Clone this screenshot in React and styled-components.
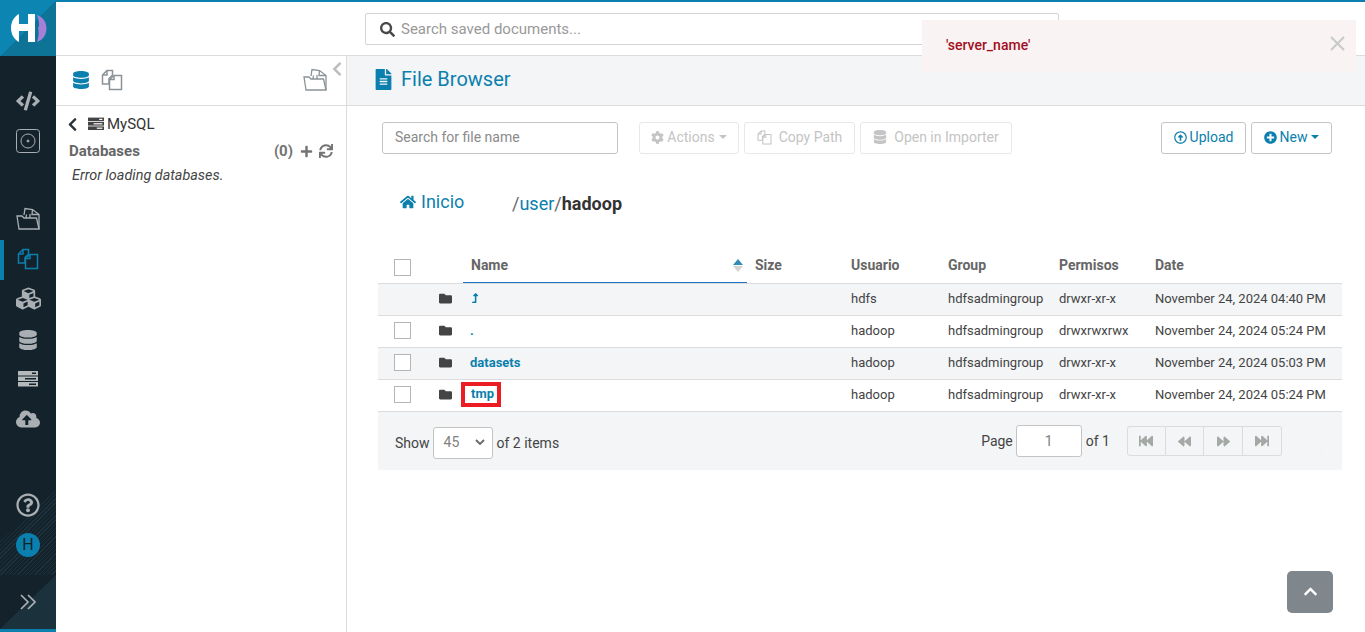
import React from "react";
import styled, { createGlobalStyle } from "styled-components";
import {
  FaChevronLeft,
  FaChevronUp,
  FaCloudUploadAlt,
  FaCode,
  FaCog,
  FaCubes,
  FaDatabase,
  FaFastBackward,
  FaFastForward,
  FaBackward,
  FaForward,
  FaFileAlt,
  FaFolder,
  FaHome,
  FaLevelUpAlt,
  FaPlus,
  FaPlusCircle,
  FaRegArrowAltCircleUp,
  FaRegQuestionCircle,
  FaSearch,
  FaSync,
} from "react-icons/fa";

const BLUE = "#0b7fad";

const GlobalStyle = createGlobalStyle`
  html, body { margin: 0; padding: 0; height: 100%; }
  body {
    font-family: Roboto, "Liberation Sans", sans-serif;
    font-size: 13px;
    color: #333;
    background: #fff;
    overflow: hidden;
  }
`;

const Page = styled.div`
  position: relative;
  display: flex;
  width: 1365px;
  height: 632px;
  overflow: hidden;
`;

/* left icon rail */
const Rail = styled.nav`
  position: relative;
  flex: 0 0 56px;
  display: flex;
  flex-direction: column;
  background: #14232b;
  border-bottom: 3px solid ${BLUE};
  box-sizing: border-box;

  &::before {
    content: "";
    position: absolute;
    left: 0;
    right: 0;
    top: 490px;
    height: 86px;
    background: repeating-linear-gradient(135deg, #1d323d 0 1px, #14232b 1px 3px);
    clip-path: polygon(100% 0, 100% 100%, 0 100%, 0 60%);
  }
`;

const Logo = styled.div`
  flex: 0 0 56px;
  display: flex;
  align-items: center;
  justify-content: center;
  background: linear-gradient(135deg, #0c85b3 50%, #0d7397 50%);
`;

const RailGroup = styled.div`
  position: relative;
  display: flex;
  flex-direction: column;
  margin-top: ${(p) => p.$top}px;
`;

const RailItem = styled.div`
  position: relative;
  height: 40px;
  box-sizing: border-box;
  display: flex;
  align-items: center;
  justify-content: center;
  padding-bottom: ${(p) => p.$lift || 0}px;
  color: ${(p) => (p.$active ? BLUE : "#a9afb3")};
  box-shadow: ${(p) => (p.$active ? `inset 4px 0 0 ${BLUE}` : "none")};
`;

const Avatar = styled.div`
  width: 24px;
  height: 24px;
  border-radius: 50%;
  background: ${BLUE};
  color: #14232b;
  font-size: 16px;
  line-height: 24px;
  text-align: center;
`;

const RailFooter = styled.div`
  position: relative;
  margin-top: 10px;
  height: 54px;
  display: flex;
  align-items: center;
  justify-content: center;
  color: #a9afb3;
  background: #14232b;

  &::before {
    content: "";
    position: absolute;
    inset: 0;
    background: #1b323d;
    clip-path: polygon(100% 0, 100% 100%, 0 100%);
  }

  svg {
    position: relative;
  }
`;

/* right of the rail */
const Shell = styled.div`
  flex: 1;
  display: flex;
  flex-direction: column;
  min-width: 0;
`;

const TopBar = styled.header`
  flex: 0 0 56px;
  box-sizing: border-box;
  display: flex;
  align-items: flex-start;
  padding: 11px 0 0 309px;
  border-top: 2px solid ${BLUE};
  border-bottom: 1px solid #dcdcdc;
`;

const GlobalSearch = styled.div`
  width: 694px;
  height: 32px;
  box-sizing: border-box;
  display: flex;
  align-items: center;
  gap: 6px;
  padding-left: 14px;
  border: 1px solid #d5d5d5;
  border-radius: 2px;
  font-size: 15px;
  color: #999;

  svg {
    color: #4a4a4a;
  }
`;

const Columns = styled.div`
  flex: 1;
  display: flex;
  min-height: 0;
`;

/* assist panel */
const Assist = styled.aside`
  position: relative;
  flex: 0 0 291px;
  box-sizing: border-box;
  border-right: 1px solid #dcdcdc;
`;

const AssistTabs = styled.div`
  height: 50px;
  box-sizing: border-box;
  display: flex;
  align-items: center;
  padding: 0 19px 2px 16px;
  gap: 11px;
  border-bottom: 1px solid #dcdcdc;
`;

const Spacer = styled.div`
  flex: 1;
`;

const Collapse = styled.div`
  position: absolute;
  top: 5px;
  right: 1px;
  color: #bdbdbd;
  line-height: 0;
`;

const AssistBody = styled.div`
  padding: 9px 13px 0 11px;
`;

const Crumb = styled.div`
  display: flex;
  align-items: center;
  height: 18px;
  font-size: 15px;
  color: #333;

  svg:first-child {
    color: #28333b;
    margin: 0 8px 0 -2px;
  }

  svg + svg {
    margin-right: 3px;
  }
`;

const DbHeader = styled.div`
  display: flex;
  align-items: center;
  margin: 9px 0 0 2px;
  height: 18px;
  font-size: 15px;
  font-weight: 700;
  color: #666;
`;

const DbTools = styled.div`
  display: flex;
  align-items: center;
  gap: 6px;
  color: #737373;

  svg:first-of-type {
    margin-left: 1px;
  }
`;

const DbError = styled.div`
  margin: 7px 0 0 5px;
  font-size: 14.4px;
  font-style: italic;
  color: #444;
`;

/* file browser */
const Main = styled.main`
  flex: 1;
  min-width: 0;
  display: flex;
  flex-direction: column;
`;

const TitleBar = styled.div`
  flex: 0 0 50px;
  box-sizing: border-box;
  display: flex;
  align-items: center;
  gap: 7px;
  padding: 0 0 3px 26px;
  background: #f3f5f7;
  border-bottom: 1px solid #dcdcdc;
  color: ${BLUE};
  font-size: 20px;
`;

const Toolbar = styled.div`
  display: flex;
  align-items: center;
  padding: 16px 33px 0 35px;
`;

const FileSearch = styled.div`
  width: 236px;
  height: 32px;
  box-sizing: border-box;
  display: flex;
  align-items: center;
  padding: 0 0 2px 12px;
  margin-right: 21px;
  border: 1px solid #c4c4c4;
  border-radius: 3px;
  font-size: 14px;
  color: #8a8a8a;
`;

const ButtonRow = styled.div`
  display: flex;
  gap: 5px;
`;

const Button = styled.div`
  width: ${(p) => p.$w}px;
  height: 32px;
  box-sizing: border-box;
  display: flex;
  align-items: center;
  justify-content: center;
  gap: ${(p) => p.$gap}px;
  padding-bottom: 2px;
  border-radius: 3px;
  font-size: 14px;
  border: 1px solid ${(p) => (p.$live ? "#c4c4c4" : "#e8e8e8")};
  color: ${(p) => (p.$live ? BLUE : "#c4c4c4")};
`;

const Caret = styled.span`
  width: 0;
  height: 0;
  margin-left: 1px;
  border-left: 4px solid transparent;
  border-right: 4px solid transparent;
  border-top: 4px solid currentColor;
`;

const Breadcrumbs = styled.div`
  display: flex;
  align-items: center;
  height: 30px;
  margin-top: 34px;
  padding-left: 53px;
  font-size: 18px;
  color: ${BLUE};
`;

const HomeLink = styled.div`
  display: flex;
  align-items: center;
  gap: 5px;
  width: 112px;
  margin-top: -3px;
`;

const Path = styled.div`
  color: ${BLUE};

  span {
    color: #666;
  }

  b {
    color: #333;
    font-weight: 700;
  }
`;

const Listing = styled.div`
  margin: 31px 23px 0 31px;
`;

const Row = styled.div`
  display: grid;
  grid-template-columns: 61px 24px 284px 96px 97px 111px 96px 1fr;
  align-items: center;
  height: ${(p) => (p.$head ? 35 : 32)}px;
  box-sizing: border-box;
  padding-bottom: ${(p) => (p.$head ? 3 : 2)}px;
  border-bottom: 1px solid #dcdcdc;
  background: ${(p) => (p.$shade ? "#f3f5f7" : "#fff")};
  font-size: 13px;
  color: #444;
`;

const Cell = styled.div`
  padding-left: 8px;
  white-space: nowrap;
`;

const HeadCell = styled(Cell)`
  font-size: 14px;
  font-weight: 700;
  color: #666;
`;

const NameHead = styled(HeadCell)`
  align-self: start;
  display: flex;
  align-items: center;
  justify-content: space-between;
  height: 34px;
  box-sizing: border-box;
  margin-bottom: -3px;
  padding: 0 4px 1px 8px;
  border-bottom: 1px solid #1e73c8;
`;

const SortArrows = styled.span`
  display: flex;
  flex-direction: column;
  gap: 1px;

  &::before,
  &::after {
    content: "";
    border-left: 5px solid transparent;
    border-right: 5px solid transparent;
  }

  &::before {
    border-bottom: 6px solid #338bb8;
  }

  &::after {
    border-top: 6px solid #d4d4d4;
  }
`;

const CheckCell = styled.div`
  padding-left: 16px;
  line-height: 0;
`;

const Check = styled.span`
  display: inline-block;
  width: 17px;
  height: 17px;
  box-sizing: border-box;
  margin-top: ${(p) => p.$low || 0}px;
  margin-bottom: ${(p) => (p.$low ? 0 : 1)}px;
  border: 1px solid #b5b5b5;
  background: #fff;
`;

const FolderCell = styled.div`
  color: #444;
  line-height: 0;
`;

const FileName = styled(Cell)`
  padding-left: 7px;
  color: ${BLUE};
  font-weight: 700;
`;

const Marked = styled.span`
  display: inline-block;
  width: 40px;
  height: 25px;
  box-sizing: border-box;
  margin-left: -9px;
  padding-left: 6px;
  border: 4px solid #ec1c24;
  line-height: 15px;
  vertical-align: middle;
`;

const Footer = styled.div`
  display: flex;
  align-items: center;
  height: 58px;
  box-sizing: border-box;
  padding: 4px 20px 0 17px;
  background: #f3f5f7;
  font-size: 14px;
  color: #444;
`;

const SizeSelect = styled.div`
  width: 60px;
  height: 32px;
  box-sizing: border-box;
  display: flex;
  align-items: center;
  justify-content: space-between;
  margin: 0 4px 0 3px;
  padding: 0 7px 2px 10px;
  background: #fff;
  border: 1px solid #c4c4c4;
  border-radius: 3px;
  color: #808080;
`;

const PageGroup = styled.div`
  display: flex;
  align-items: center;
  margin-bottom: 4px;
`;

const PageInput = styled.div`
  width: 66px;
  height: 32px;
  box-sizing: border-box;
  display: flex;
  align-items: center;
  justify-content: center;
  margin: 0 4px 0 3px;
  background: #fff;
  border: 1px solid #c4c4c4;
  border-radius: 3px;
  color: #808080;
`;

const Pager = styled.div`
  display: flex;
  width: 195px;
  height: 30px;
  margin-left: 17px;
  border-radius: 3px;
  background: #f4f5f7;
  box-shadow: 0 0 1px rgba(0, 0, 0, 0.06);
`;

const PagerButton = styled.div`
  width: 38.7px;
  box-sizing: border-box;
  display: flex;
  align-items: center;
  justify-content: center;
  color: #a5a9a5;
  border: 1px solid #dcdcdc;
  border-left-width: ${(p) => (p.$first ? 1 : 0)}px;
  border-radius: ${(p) => (p.$first ? "3px 0 0 3px" : p.$last ? "0 3px 3px 0" : 0)};
`;

/* floating parts */
const Toast = styled.div`
  position: absolute;
  left: 922px;
  top: 20px;
  width: 434px;
  height: 52px;
  box-sizing: border-box;
  padding: 17px 24px;
  background: #f9f3f3;
  color: #a30f1f;
  font-size: 14px;
  line-height: 16px;
  font-weight: 500;

  svg {
    position: absolute;
    right: 11px;
    top: 16px;
  }
`;

const BackToTop = styled.div`
  position: absolute;
  left: 1287px;
  top: 571px;
  width: 46px;
  height: 42px;
  display: flex;
  align-items: center;
  justify-content: center;
  padding-bottom: 2px;
  box-sizing: border-box;
  border-radius: 5px;
  background: #7f868c;
  color: #fff;
`;

/* drawn icons */
const HueLogo = () => (
  <svg width="38" height="30" viewBox="0 0 38 30">
    <path
      fill="#fff"
      d="M10 1 C5 3.500 2 9 2 15 C2 21 5 26.500 10 29 L10 18 L19 18 L19 29 L26 29 L26 1 L19 1 L19 11 L10 11 Z"
    />
    <path
      fill="#a57fd8"
      d="M28 2 C34 4 37.500 9 37.500 15.500 C37.500 21.500 34 27 28 29 C30 23 30 19 29 15 C31 13 30 8 28 2 Z"
    />
  </svg>
);

const Docs = ({ size = 22, color = "currentColor" }) => (
  <svg width={size} height={size} viewBox="0 0 22 22" fill="none" stroke={color} strokeWidth="1.500">
    <path d="M6 1.500 H11.500 V6 L8 9.500 V15 H1.500 V6 Z" />
    <path d="M13 6.500 H20.500 V20.500 H8.500 V10.500 Z" />
    <path d="M6 1.500 V6 H1.500 M13 6.500 V10.500 H8.500" />
  </svg>
);

const OpenFolder = ({ size = 24, color = "currentColor" }) => (
  <svg width={size} height={size} viewBox="0 0 24 24" fill="none" stroke={color} strokeWidth="1.300">
    <path d="M3 22 L1 9 H6 L8 11 H20.500 L23 22 Z" />
    <path d="M8 8 L9 1.500 L16.500 2.500 L23 7.500 V22" />
    <path d="M16.500 2.500 L16 7.500 H23" />
    <path d="M10 11 L10.500 7.500 M14 11 L14 7" />
  </svg>
);

const Builder = () => (
  <svg width="24" height="24" viewBox="0 0 24 24" fill="none" stroke="currentColor">
    <rect x="0.500" y="0.500" width="23" height="23" rx="3" />
    <circle cx="12" cy="12" r="7" />
    <circle cx="12" cy="12" r="1" fill="currentColor" />
  </svg>
);

const ServerIcon = ({ size = 20, height = 16, stripe = "#14232b", fill = "#b4b9bc" }) => (
  <svg width={size} height={height} viewBox="0 0 20 16">
    {[0, 5.500, 11].map((y, i) => (
      <g key={y}>
        <rect x="0" y={y} width="20" height="4.500" fill={fill} />
        <rect x={i === 0 ? 14 : i === 1 ? 7 : 11} y={y + 1.500} width={i === 0 ? 4 : i === 1 ? 11 : 7} height="1.500" fill={stripe} />
      </g>
    ))}
  </svg>
);

const DoubleRight = () => (
  <svg width="16" height="16" viewBox="0 0 16 16" fill="none" stroke="currentColor" strokeWidth="1.700">
    <path d="M1 1 L8 8 L1 15 M8 1 L15 8 L8 15" />
  </svg>
);

const CloseX = () => (
  <svg width="15" height="15" viewBox="0 0 15 15" fill="none" stroke="#c9c9c9" strokeWidth="2">
    <path d="M1 1 L14 14 M14 1 L1 14" />
  </svg>
);

const CHEVRON = (
  <svg width="10" height="6" viewBox="0 0 10 6" fill="none" stroke="#666" strokeWidth="1.800">
    <path d="M1 1 L5 5 L9 1" />
  </svg>
);

const files = [
  { name: <FaLevelUpAlt size={10} />, user: "hdfs", perms: "drwxr-xr-x", date: "November 24, 2024 04:40 PM", noCheck: true, shade: true },
  { name: ".", user: "hadoop", perms: "drwxrwxrwx", date: "November 24, 2024 05:24 PM" },
  { name: "datasets", user: "hadoop", perms: "drwxr-xr-x", date: "November 24, 2024 05:03 PM", shade: true },
  { name: "tmp", user: "hadoop", perms: "drwxr-xr-x", date: "November 24, 2024 05:24 PM", marked: true },
];

export default function App() {
  return (
    <Page>
      <GlobalStyle />
      <Rail>
        <Logo>
          <HueLogo />
        </Logo>
        <RailGroup $top={25}>
          <RailItem><FaCode size={24} /></RailItem>
          <RailItem><Builder /></RailItem>
        </RailGroup>
        <RailGroup $top={39}>
          <RailItem $lift={2}><OpenFolder /></RailItem>
          <RailItem $active $lift={2}><Docs /></RailItem>
          <RailItem $lift={3}><FaCubes size={25} /></RailItem>
          <RailItem><FaDatabase size={20} /></RailItem>
          <RailItem $lift={2}><ServerIcon /></RailItem>
          <RailItem $lift={3}><FaCloudUploadAlt size={24} /></RailItem>
        </RailGroup>
        <RailGroup $top={45}>
          <RailItem><FaRegQuestionCircle size={24} /></RailItem>
          <RailItem><Avatar>H</Avatar></RailItem>
        </RailGroup>
        <RailFooter>
          <DoubleRight />
        </RailFooter>
      </Rail>

      <Shell>
        <TopBar>
          <GlobalSearch>
            <FaSearch size={15} />
            Search saved documents...
          </GlobalSearch>
        </TopBar>
        <Columns>
          <Assist>
            <AssistTabs>
              <FaDatabase size={18} color={BLUE} />
              <Docs color="#8a9297" />
              <Spacer />
              <OpenFolder color="#8a9297" />
            </AssistTabs>
            <Collapse>
              <FaChevronLeft size={16} />
            </Collapse>
            <AssistBody>
              <Crumb>
                <FaChevronLeft size={15} />
                <ServerIcon size={16} height={14} stripe="#fff" fill="#444" />
                MySQL
              </Crumb>
              <DbHeader>
                Databases
                <Spacer />
                <DbTools>
                  (0)
                  <FaPlus size={13} />
                  <FaSync size={14} />
                </DbTools>
              </DbHeader>
              <DbError>Error loading databases.</DbError>
            </AssistBody>
          </Assist>

          <Main>
            <TitleBar>
              <FaFileAlt size={21} />
              File Browser
            </TitleBar>
            <Toolbar>
              <FileSearch>Search for file name</FileSearch>
              <ButtonRow>
                <Button $w={100} $gap={3}><FaCog size={13} />Actions<Caret /></Button>
                <Button $w={111} $gap={7}><Docs size={15} />Copy Path</Button>
                <Button $w={152} $gap={7}><FaDatabase size={14} />Open in Importer</Button>
              </ButtonRow>
              <Spacer />
              <ButtonRow>
                <Button $live $w={85} $gap={3}><FaRegArrowAltCircleUp size={13} />Upload</Button>
                <Button $live $w={81} $gap={3}><FaPlusCircle size={13} />New<Caret /></Button>
              </ButtonRow>
            </Toolbar>
            <Breadcrumbs>
              <HomeLink>
                <FaHome size={16} />
                Inicio
              </HomeLink>
              <Path>
                <span>/</span>user<span>/</span><b>hadoop</b>
              </Path>
            </Breadcrumbs>
            <Listing>
              <Row $head>
                <CheckCell><Check $low={5} /></CheckCell>
                <div />
                <NameHead>Name<SortArrows /></NameHead>
                <HeadCell>Size</HeadCell>
                <HeadCell>Usuario</HeadCell>
                <HeadCell>Group</HeadCell>
                <HeadCell>Permisos</HeadCell>
                <HeadCell>Date</HeadCell>
              </Row>
              {files.map((file) => (
                <Row key={file.date + file.user + file.perms} $shade={file.shade}>
                  <CheckCell>{!file.noCheck && <Check />}</CheckCell>
                  <FolderCell><FaFolder size={13} /></FolderCell>
                  <FileName>{file.marked ? <Marked>{file.name}</Marked> : file.name}</FileName>
                  <Cell />
                  <Cell>{file.user}</Cell>
                  <Cell>hdfsadmingroup</Cell>
                  <Cell>{file.perms}</Cell>
                  <Cell>{file.date}</Cell>
                </Row>
              ))}
              <Footer>
                Show
                <SizeSelect>45{CHEVRON}</SizeSelect>
                of 2 items
                <Spacer />
                <PageGroup>
                  Page
                  <PageInput>1</PageInput>
                  of 1
                  <Pager>
                    <PagerButton $first><FaFastBackward size={14} /></PagerButton>
                    <PagerButton><FaBackward size={13} /></PagerButton>
                    <PagerButton><FaForward size={13} /></PagerButton>
                    <PagerButton $last><FaFastForward size={14} /></PagerButton>
                  </Pager>
                </PageGroup>
              </Footer>
            </Listing>
          </Main>
        </Columns>
      </Shell>

      <Toast>
        'server_name'
        <CloseX />
      </Toast>
      <BackToTop>
        <FaChevronUp size={15} />
      </BackToTop>
    </Page>
  );
}
